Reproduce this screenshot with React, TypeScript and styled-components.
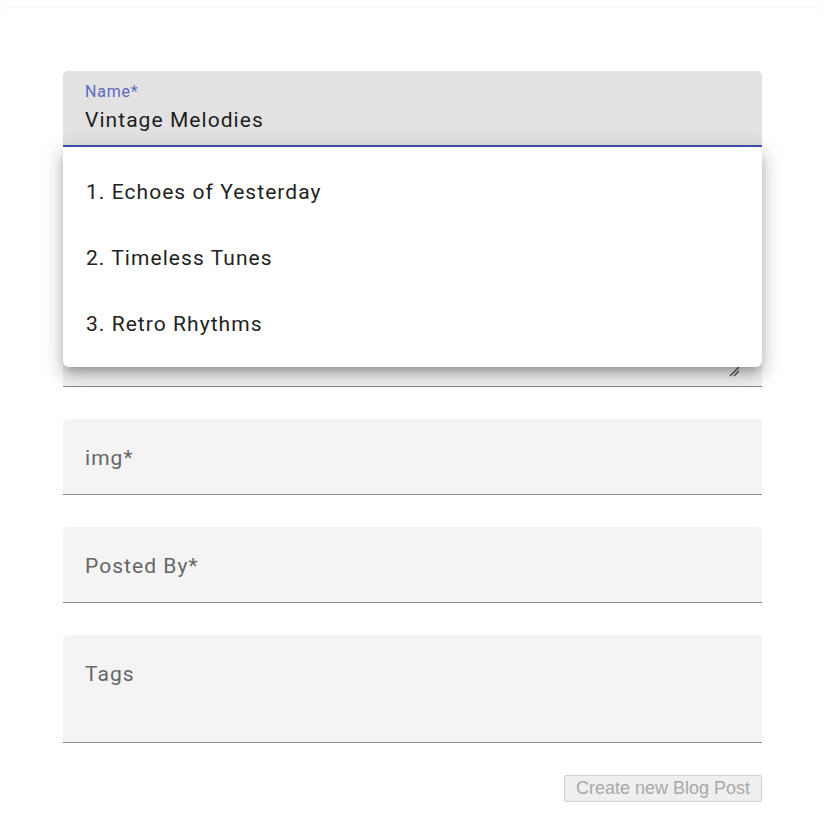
import React from "react";
import styled, { createGlobalStyle } from "styled-components";

const Global = createGlobalStyle`
  html, body { margin: 0; padding: 0; background: #ffffff; }
  body { font-family: Roboto, "Liberation Sans", sans-serif; }
`;

const Card = styled.div`
  margin-top: 7px;
  border-radius: 8px;
  box-shadow: 0 -1px 2px rgba(0,0,0,0.03);
  border-top: 1px solid #f6f6f6;
  padding: 63px 62px 36px 63px;
  display: flex;
  flex-direction: column;
  gap: 32px;
  position: relative;
`;

const Field = styled.div<{ $h?: number; $focused?: boolean }>`
  position: relative;
  display: flex;
  flex-direction: column;
  align-items: flex-start;
  height: ${(p) => p.$h ?? 76}px;
  box-sizing: border-box;
  background: ${(p) => (p.$focused ? "#e2e2e2" : "#f4f4f4")};
  border-radius: 5px 5px 0 0;
  border-bottom: ${(p) => (p.$focused ? "2px solid #3f51b5" : "1px solid #8a8a8a")};
  padding: ${(p) => (p.$focused ? "11px 22px 0" : "27px 22px 0")};
`;

const Label = styled.div<{ $shrink?: boolean }>`
  font-size: ${(p) => (p.$shrink ? "16px" : "21px")};
  letter-spacing: 0.05em;
  color: ${(p) => (p.$shrink ? "#5c6bc0" : "#666666")};
  line-height: 1.2;
`;

const Value = styled.div`
  margin-top: 5px;
  font-size: 21px;
  letter-spacing: 0.05em;
  color: #1e1e1e;
  line-height: 1.4;
`;

const Grip = styled.svg`
  position: absolute;
  right: 22px;
  bottom: 9px;
`;

const Menu = styled.ul`
  position: absolute;
  left: 63px;
  right: 62px;
  top: 139px;
  margin: 0;
  padding: 12px 0 10px;
  list-style: none;
  background: #ffffff;
  border-radius: 0 0 6px 6px;
  box-shadow: 0 6px 8px -3px rgba(0,0,0,0.22), 0 10px 16px 1px rgba(0,0,0,0.14), 0 4px 22px 3px rgba(0,0,0,0.12);
  z-index: 2;
`;

const MenuItem = styled.li`
  height: 66px;
  display: flex;
  align-items: center;
  padding: 0 23px;
  font-size: 21px;
  letter-spacing: 0.05em;
  color: #222222;
`;

const Actions = styled.div`
  display: flex;
  justify-content: flex-end;
`;

const Button = styled.button`
  font-family: "Liberation Sans", Arial, sans-serif;
  font-size: 18px;
  color: #a8a8a8;
  background: #efefef;
  border: 1px solid #d0d0d0;
  border-radius: 2px;
  height: 27px;
  padding: 0 11px;
  margin: 0;
`;

export default function App() {
  return (
    <>
      <Global />
      <Card>
        <Field $focused>
          <Label $shrink>Name*</Label>
          <Value>Vintage Melodies</Value>
        </Field>
        <Field $h={208}>
          <Label>Description*</Label>
          <Grip width="12" height="12" viewBox="0 0 12 12">
            <path d="M2 11 L11 2 M6 11 L11 6" stroke="#555" strokeWidth="1.5" />
          </Grip>
        </Field>
        <Field>
          <Label>img*</Label>
        </Field>
        <Field>
          <Label>Posted By*</Label>
        </Field>
        <Field $h={108}>
          <Label>Tags</Label>
        </Field>
        <Actions>
          <Button disabled>Create new Blog Post</Button>
        </Actions>
        <Menu>
          <MenuItem>1. Echoes of Yesterday</MenuItem>
          <MenuItem>2. Timeless Tunes</MenuItem>
          <MenuItem>3. Retro Rhythms</MenuItem>
        </Menu>
      </Card>
    </>
  );
}
